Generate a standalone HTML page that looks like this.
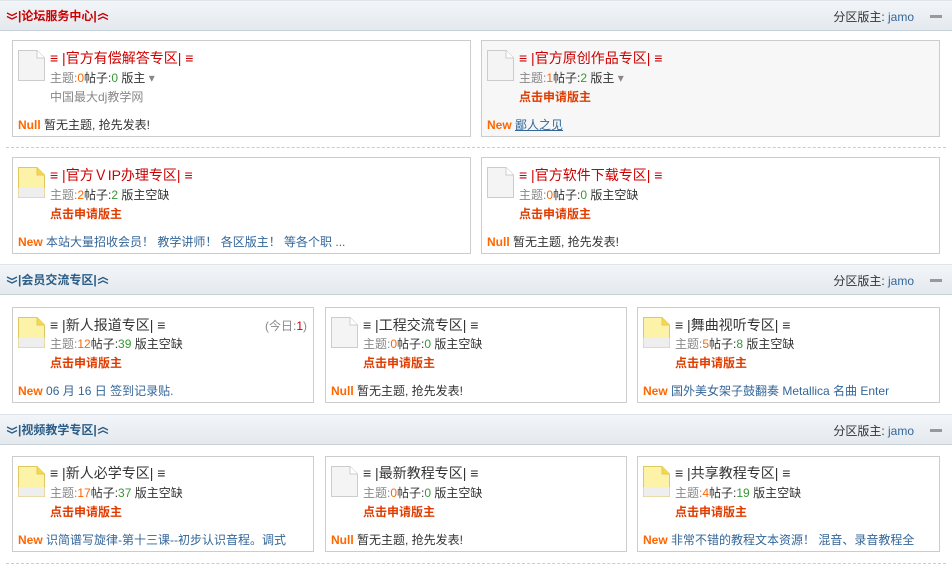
<!DOCTYPE html>
<html><head><meta charset="utf-8"><style>
*{margin:0;padding:0;box-sizing:border-box}
body{width:952px;height:566px;background:#fff;font:12px "Liberation Sans","Noto Sans CJK SC",sans-serif;color:#333;position:relative;overflow:hidden}
.hd{position:absolute;left:0;width:952px;height:31px;background:linear-gradient(#f2f5f8,#e4e9ee);border-top:1px solid #dfe5ea;border-bottom:1px solid #c6d0d9}
.hd .t{position:absolute;left:6px;top:6px;font-weight:bold;font-size:12px;color:#2a5c86;white-space:nowrap}
.hd .t svg{vertical-align:middle;margin-top:-2px}
.hd .r{position:absolute;right:38px;top:7px;color:#333}
.hd .r a{color:#336699}
.hd .m{position:absolute;right:10px;top:14px;width:12px;height:3px;background:#999}
.box{position:absolute;border:1px solid #ccc;background:#fff}
.g{background:#f7f7f7}
.ic{position:absolute;left:5px;top:9px;width:27px;height:31px}
.l{position:absolute;left:37px;white-space:nowrap}
.ti{font-size:14px;color:#333}
.red .ti{color:#c00}
.gy{color:#888}
.o{color:#f60}.gr{color:#393}
.ap{color:#e03c00;font-weight:bold;font-size:12px}
.b{position:absolute;left:5px;white-space:nowrap}
.nw{color:#f60;font-weight:bold}
.b a{color:#336699;text-decoration:none}
.dash{position:absolute;left:6px;width:940px;border-top:1px dashed #ccc}
</style></head><body>
<svg width="0" height="0" style="position:absolute"><defs>
<symbol id="f" viewBox="0 0 27 31"><path d="M0.5 0.5H19L26.5 8V30.5H0.5Z" fill="#f4f4f4" stroke="#ccc"/><path d="M19 .5V8h7.5" fill="#fff" stroke="#ccc"/></symbol>
<symbol id="n" viewBox="0 0 27 31"><path d="M0.5 0.5H19L26.5 8V30.5H0.5Z" fill="#fdf3a8" stroke="#e0c860"/><path d="M19 .5V8h7.5" fill="#f7d84a" stroke="#e0c860"/><rect x="0.5" y="21" width="26" height="9.5" fill="#eee"/></symbol>
<symbol id="dn" viewBox="0 0 12 8"><path d="M1 1l5 2.5L11 1M1 4.5l5 2.5 5-2.5" fill="none" stroke="currentColor" stroke-width="1.3"/></symbol>
<symbol id="up" viewBox="0 0 12 8"><path d="M1 4l5-2.5L11 4M1 7.5l5-2.5 5 2.5" fill="none" stroke="currentColor" stroke-width="1.3"/></symbol>
</defs></svg>

<div class="hd" style="top:0"><div class="t" style="color:#c00"><svg width="12" height="8"><use href="#dn"/></svg>|论坛服务中心|<svg width="12" height="8"><use href="#up"/></svg></div><div class="r">分区版主: <a>jamo</a></div><div class="m"></div></div>

<div class="box red" style="left:12px;top:40px;width:459px;height:97px"><svg class="ic"><use href="#f"/></svg>
<div class="l ti" style="top:7px">≡ |官方有偿解答专区| ≡</div>
<div class="l" style="top:28px"><span class="gy">主题:</span><span class="o">0</span>帖子:<span class="gr">0</span> 版主 <span class="gy">▾</span></div>
<div class="l gy" style="top:47px">中国最大dj教学网</div>
<div class="b" style="top:75px"><span class="nw">Null</span> 暂无主题, 抢先发表!</div></div>

<div class="box red g" style="left:481px;top:40px;width:459px;height:97px"><svg class="ic"><use href="#f"/></svg>
<div class="l ti" style="top:7px">≡ |官方原创作品专区| ≡</div>
<div class="l" style="top:28px"><span class="gy">主题:</span><span class="o">1</span>帖子:<span class="gr">2</span> 版主 <span class="gy">▾</span></div>
<div class="l ap" style="top:47px">点击申请版主</div>
<div class="b" style="top:75px"><span class="nw">New</span> <a style="text-decoration:underline">鄙人之见</a></div></div>

<div class="dash" style="top:147px"></div>

<div class="box red" style="left:12px;top:157px;width:459px;height:97px"><svg class="ic"><use href="#n"/></svg>
<div class="l ti" style="top:7px">≡ |官方ＶIP办理专区| ≡</div>
<div class="l" style="top:28px"><span class="gy">主题:</span><span class="o">2</span>帖子:<span class="gr">2</span> 版主空缺</div>
<div class="l ap" style="top:47px">点击申请版主</div>
<div class="b" style="top:75px"><span class="nw">New</span> <a>本站大量招收会员！ 教学讲师！ 各区版主！ 等各个职 ...</a></div></div>

<div class="box red" style="left:481px;top:157px;width:459px;height:97px"><svg class="ic"><use href="#f"/></svg>
<div class="l ti" style="top:7px">≡ |官方软件下载专区| ≡</div>
<div class="l" style="top:28px"><span class="gy">主题:</span><span class="o">0</span>帖子:<span class="gr">0</span> 版主空缺</div>
<div class="l ap" style="top:47px">点击申请版主</div>
<div class="b" style="top:75px"><span class="nw">Null</span> 暂无主题, 抢先发表!</div></div>

<div class="hd" style="top:264px"><div class="t"><svg width="12" height="8"><use href="#dn"/></svg>|会员交流专区|<svg width="12" height="8"><use href="#up"/></svg></div><div class="r">分区版主: <a>jamo</a></div><div class="m"></div></div>

<div class="box" style="left:12px;top:307px;width:302px;height:96px"><svg class="ic"><use href="#n"/></svg>
<div class="l ti" style="top:7px">≡ |新人报道专区| ≡</div><div style="position:absolute;right:6px;top:9px" class="gy">(今日:<span style="color:#c00">1</span>)</div>
<div class="l" style="top:27px"><span class="gy">主题:</span><span class="o">12</span>帖子:<span class="gr">39</span> 版主空缺</div>
<div class="l ap" style="top:46px">点击申请版主</div>
<div class="b" style="top:74px"><span class="nw">New</span> <a>06 月 16 日 签到记录贴.</a></div></div>

<div class="box" style="left:325px;top:307px;width:302px;height:96px"><svg class="ic"><use href="#f"/></svg>
<div class="l ti" style="top:7px">≡ |工程交流专区| ≡</div>
<div class="l" style="top:27px"><span class="gy">主题:</span><span class="o">0</span>帖子:<span class="gr">0</span> 版主空缺</div>
<div class="l ap" style="top:46px">点击申请版主</div>
<div class="b" style="top:74px"><span class="nw">Null</span> 暂无主题, 抢先发表!</div></div>

<div class="box" style="left:637px;top:307px;width:303px;height:96px"><svg class="ic"><use href="#n"/></svg>
<div class="l ti" style="top:7px">≡ |舞曲视听专区| ≡</div>
<div class="l" style="top:27px"><span class="gy">主题:</span><span class="o">5</span>帖子:<span class="gr">8</span> 版主空缺</div>
<div class="l ap" style="top:46px">点击申请版主</div>
<div class="b" style="top:74px"><span class="nw">New</span> <a>国外美女架子鼓翻奏 Metallica 名曲 Enter</a></div></div>

<div class="hd" style="top:414px"><div class="t"><svg width="12" height="8"><use href="#dn"/></svg>|视频教学专区|<svg width="12" height="8"><use href="#up"/></svg></div><div class="r">分区版主: <a>jamo</a></div><div class="m"></div></div>

<div class="box" style="left:12px;top:456px;width:302px;height:96px"><svg class="ic"><use href="#n"/></svg>
<div class="l ti" style="top:6px">≡ |新人必学专区| ≡</div>
<div class="l" style="top:27px"><span class="gy">主题:</span><span class="o">17</span>帖子:<span class="gr">37</span> 版主空缺</div>
<div class="l ap" style="top:46px">点击申请版主</div>
<div class="b" style="top:74px"><span class="nw">New</span> <a>识简谱写旋律-第十三课--初步认识音程。调式</a></div></div>

<div class="box" style="left:325px;top:456px;width:302px;height:96px"><svg class="ic"><use href="#f"/></svg>
<div class="l ti" style="top:6px">≡ |最新教程专区| ≡</div>
<div class="l" style="top:27px"><span class="gy">主题:</span><span class="o">0</span>帖子:<span class="gr">0</span> 版主空缺</div>
<div class="l ap" style="top:46px">点击申请版主</div>
<div class="b" style="top:74px"><span class="nw">Null</span> 暂无主题, 抢先发表!</div></div>

<div class="box" style="left:637px;top:456px;width:303px;height:96px"><svg class="ic"><use href="#n"/></svg>
<div class="l ti" style="top:6px">≡ |共享教程专区| ≡</div>
<div class="l" style="top:27px"><span class="gy">主题:</span><span class="o">4</span>帖子:<span class="gr">19</span> 版主空缺</div>
<div class="l ap" style="top:46px">点击申请版主</div>
<div class="b" style="top:74px"><span class="nw">New</span> <a>非常不错的教程文本资源！ 混音、录音教程全</a></div></div>

<div class="dash" style="top:563px"></div>
</body></html>
